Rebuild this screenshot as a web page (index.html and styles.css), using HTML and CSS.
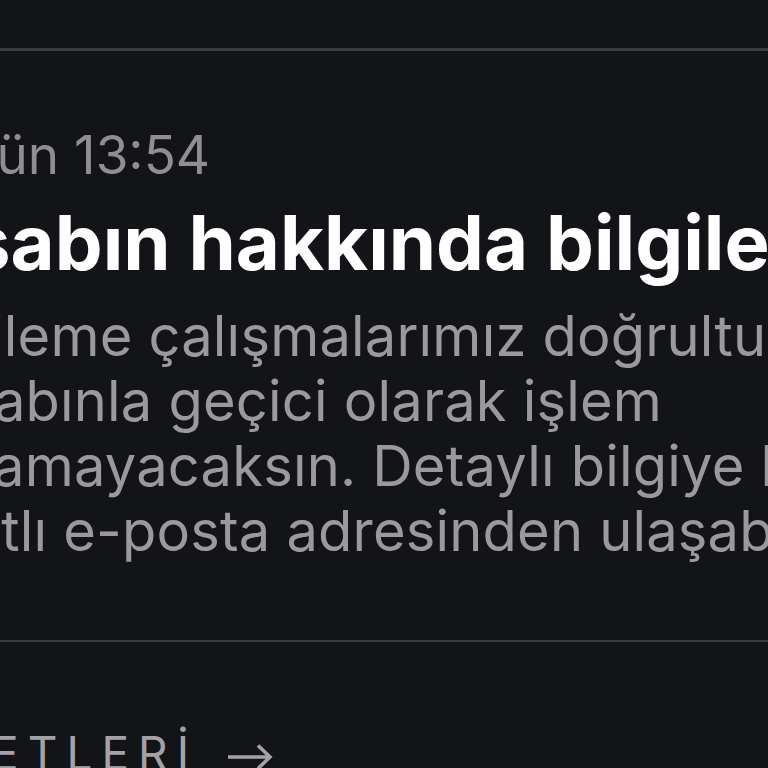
FILE: index.html
```html
<!DOCTYPE html>
<html lang="tr">
<head>
<meta charset="utf-8">
<title>Bildirim</title>
<link rel="stylesheet" href="styles.css">
</head>
<body>
<div class="screen">
  <div class="divider"></div>
  <article class="notice">
    <div class="date">Bugün 13:54</div>
    <h2 class="title">Hesabın hakkında bilgilendirme</h2>
    <p class="text">
      <span class="line line-first">Yenileme çalışmalarımız doğrultusunda</span>
      <span class="line">hesabınla geçici olarak işlem</span>
      <span class="line line-third">yapamayacaksın. Detaylı bilgiye hesabına</span>
      <span class="line line-fourth">kayıtlı e-posta adresinden ulaşabilirsin.</span>
    </p>
  </article>
  <div class="divider divider-bottom"></div>
  <a class="action" href="#">
    <span class="action-label">HAREKETLERİ</span>
    <svg class="arrow" width="48" height="32" viewBox="0 0 48 32" aria-hidden="true">
      <path d="M2 16 H44 M32 4.5 L44 16 L32 27.5" fill="none" stroke="#a3a3a7" stroke-width="3.6" stroke-linecap="butt" stroke-linejoin="miter"/>
    </svg>
  </a>
</div>
</body>
</html>
```
FILE: styles.css
```css
html, body {
  margin: 0;
  padding: 0;
  background: #131418;
  overflow: hidden;
  height: 100%;
}

.screen {
  width: 768px;
  height: 768px;
  overflow: hidden;
  padding-top: 48px;
  box-sizing: border-box;
  font-family: "Inter", "Noto Sans", sans-serif;
}

.divider {
  height: 3px;
  background: #3b3c41;
}

.notice {
  margin-left: -102px;
  padding-top: 73px;
  padding-bottom: 76px;
  white-space: nowrap;
}

.date {
  font-size: 53px;
  line-height: 62px;
  color: #8f8f93;
  font-weight: 400;
}

.title {
  margin: 16px 0 0 -32px;
  font-size: 76px;
  line-height: 80px;
  font-weight: 700;
  color: #ffffff;
  letter-spacing: 0;
}

.text {
  margin: 22px 0 0;
  font-size: 56px;
  line-height: 65px;
  color: #9a9a9e;
  font-weight: 400;
  letter-spacing: 0.2px;
}

.line {
  display: block;
}

.line-first {
  text-indent: -8px;
}

.line-third {
  text-indent: -3px;
}

.line-fourth {
  text-indent: -4px;
}

.divider-bottom {
  height: 2px;
}

.action {
  display: flex;
  align-items: center;
  gap: 28px;
  margin-top: 88px;
  margin-left: -208px;
  text-decoration: none;
  color: #a3a3a7;
  white-space: nowrap;
}

.action-label {
  font-size: 46px;
  line-height: 46px;
  letter-spacing: 9px;
  font-weight: 400;
}

.arrow {
  flex: none;
  margin-top: 8px;
}
```
